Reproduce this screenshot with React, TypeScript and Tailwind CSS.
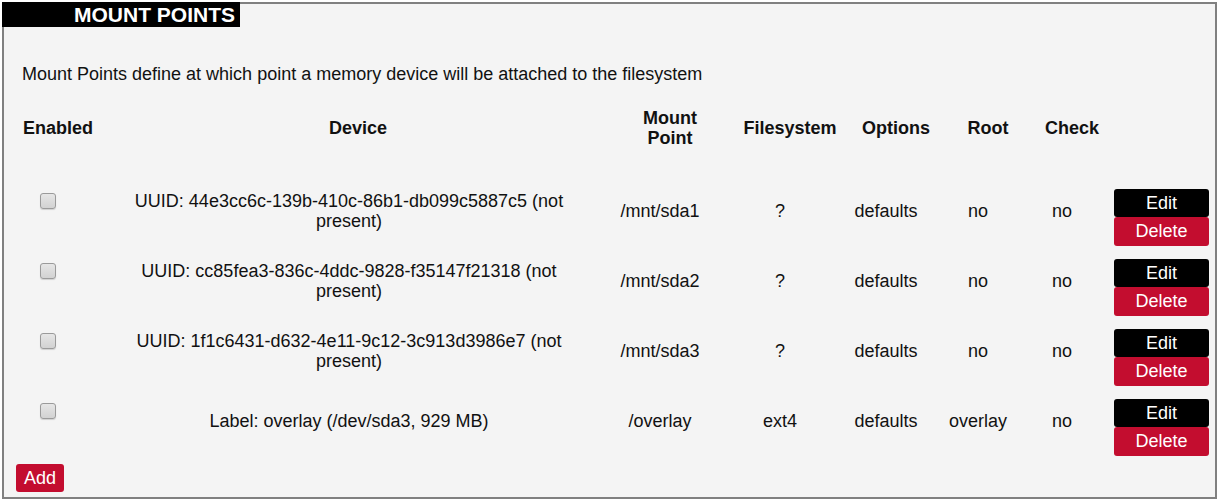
const rows = [
  { device: 'UUID: 44e3cc6c-139b-410c-86b1-db099c5887c5 (not present)', mount: '/mnt/sda1', fs: '?', opts: 'defaults', root: 'no', check: 'no' },
  { device: 'UUID: cc85fea3-836c-4ddc-9828-f35147f21318 (not present)', mount: '/mnt/sda2', fs: '?', opts: 'defaults', root: 'no', check: 'no' },
  { device: 'UUID: 1f1c6431-d632-4e11-9c12-3c913d3986e7 (not present)', mount: '/mnt/sda3', fs: '?', opts: 'defaults', root: 'no', check: 'no' },
  { device: 'Label: overlay (/dev/sda3, 929 MB)', mount: '/overlay', fs: 'ext4', opts: 'defaults', root: 'overlay', check: 'no' },
]

const cols = 'grid grid-cols-[84px_516px_108px_132px_80px_104px_64px_106px]'

function Checkbox() {
  return (
    <span className="block w-[16px] h-[16px] rounded-[3px] border border-[#9a9a9a] bg-gradient-to-b from-[#e6e6e6] to-[#d2d2d2] shadow-[0_1px_1px_rgba(0,0,0,0.15)]" />
  )
}

export default function App() {
  return (
    <div className="bg-white min-h-[503px] pt-[2px] pl-[2px] font-['Liberation_Sans',Arial,sans-serif] text-[18px] text-[#111]">
      <div className="w-[1215px] h-[497px] border-2 border-[#808080] bg-[#f4f4f4]">
        {/* заголовок поверх рамки, как legend */}
        <div className="-mt-[2px] -ml-[2px] w-[238px] h-[25px] bg-black text-white font-bold text-[21px] leading-[25px] pl-[72px]">
          MOUNT POINTS
        </div>

        <p className="mt-[37px] pl-[18px] leading-[20px]">
          Mount Points define at which point a memory device will be attached to the filesystem
        </p>

        <div className="pl-[12px]">
          <div className={`${cols} mt-[12px] h-[64px] font-bold leading-[20px] text-center`}>
            {['Enabled', 'Device', 'Mount Point', 'Filesystem', 'Options', 'Root', 'Check'].map((h) => (
              <div key={h} className="flex items-center justify-center">
                {h === 'Mount Point' ? (
                  <span>
                    Mount
                    <br />
                    Point
                  </span>
                ) : (
                  h
                )}
              </div>
            ))}
            <div />
          </div>

          <div className="mt-[16px]">
            {rows.map((r) => (
              <div key={r.mount} className={`${cols} h-[70px] leading-[20px] text-center`}>
                <div className="flex justify-center pr-[20px] pt-[17px]">
                  <Checkbox />
                </div>
                <div className="flex items-center justify-center pl-[20px] pr-[38px]">{r.device}</div>
                <div className="flex items-center justify-center pr-[20px]">{r.mount}</div>
                <div className="flex items-center justify-center pr-[20px]">{r.fs}</div>
                <div className="flex items-center justify-center pr-[20px]">{r.opts}</div>
                <div className="flex items-center justify-center pr-[20px]">{r.root}</div>
                <div className="flex items-center justify-center pr-[20px]">{r.check}</div>
                <div className="flex flex-col justify-end pl-[10px]">
                  <button className="w-[95px] h-[28px] rounded-[3px] bg-black text-white leading-[28px]">Edit</button>
                  <button className="w-[95px] h-[29px] rounded-[3px] bg-[#c30d2f] text-white leading-[29px]">Delete</button>
                </div>
              </div>
            ))}
          </div>

          <button className="mt-[8px] h-[28px] px-[8px] rounded-[3px] bg-[#c30d2f] text-white leading-[28px]">Add</button>
        </div>
      </div>
    </div>
  )
}
